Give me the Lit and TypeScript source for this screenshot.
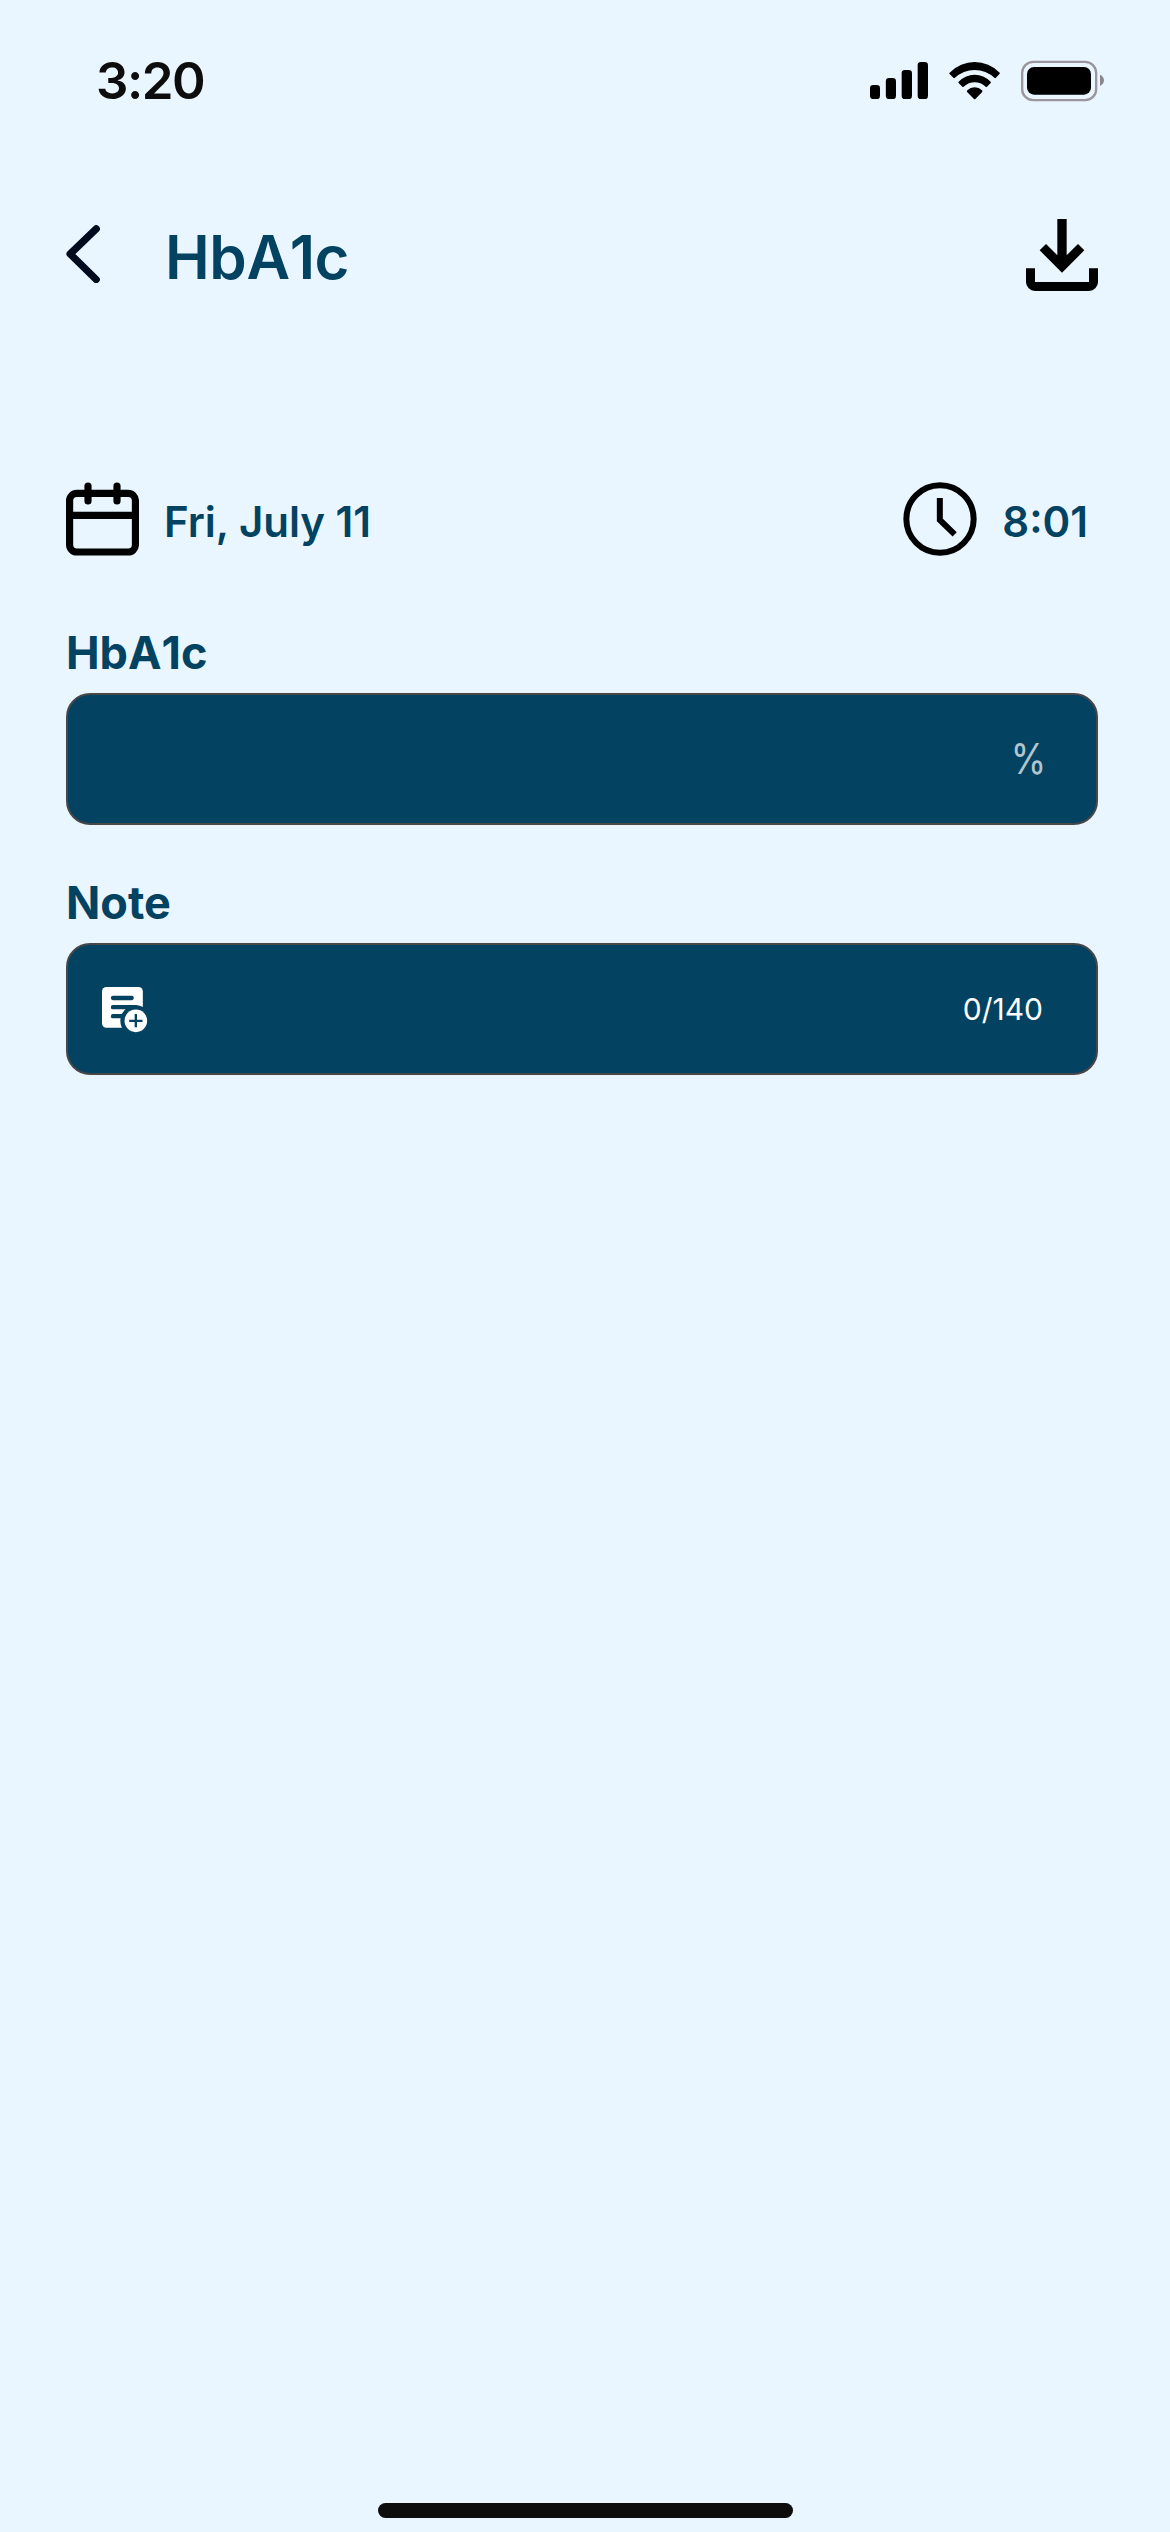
import { LitElement, html, css } from "lit";
import { customElement, property } from "lit/decorators.js";

const signalIcon = html`<svg width="58" height="42" viewBox="60 60 174 126">
  <rect x="60" y="135" width="30" height="42" rx="10" />
  <rect x="107.5" y="114" width="30.5" height="63" rx="10" />
  <rect x="155" y="90" width="31" height="87" rx="10" />
  <rect x="203" y="66" width="31" height="111" rx="10" />
</svg>`;

const wifiIcon = html`<svg width="51" height="42" viewBox="297 60 153 126">
  <path d="M299 98Q331 66 374 66Q417 66 449 98Q450 100 449 101L437 114Q435 115 434 114Q408 90 374 90Q340 90 314 114Q313 115 311 114L298 101Q297.500 100 299 98Z" />
  <path d="M326 125Q347 104 374 104Q401 104 422 125Q424 127 422 129L411 140Q409 142 407 140Q392 127 374 127Q356 127 341 140Q339 142 337 140L326 129Q324 127 326 125Z" />
  <path d="M352 151Q361 142 374 142Q387 142 396 151Q399 154 396 157L376 177Q374 179 372 177L352 157Q349 154 352 151Z" />
</svg>`;

const batteryIcon = html`<svg width="84" height="42" viewBox="513 60 252 126">
  <rect x="516.500" y="65.500" width="222" height="115" rx="33" fill="none" stroke="#9b959d" stroke-width="7" />
  <rect x="531" y="81" width="192" height="83" rx="21" />
  <path d="M750 104Q762 110 762 121Q762 132 750 138Z" fill="#8b868d" />
</svg>`;

const backIcon = html`<svg class="back" width="34" height="58" viewBox="50 74 102 174">
  <path d="M140.500 85.500L62.500 161L140.500 237.500" fill="none" stroke="#000c1d" stroke-width="22" stroke-linecap="round" stroke-linejoin="round" />
</svg>`;

const downloadIcon = html`<svg width="72" height="72" viewBox="78 57 216 216">
  <path d="M172 57H200V166L234 132L253 151L186 218L119 151L138 132L172 166Z" />
  <path d="M78 205H105V246H267V205H294V246A27 27 0 0 1 267 273H105A27 27 0 0 1 78 246Z" />
</svg>`;

const calendarIcon = html`<svg width="73" height="74" viewBox="48 36 219 222">
  <g fill="none" stroke="#000" stroke-width="21.500" stroke-linecap="round">
    <rect x="58.800" y="70" width="197.500" height="176" rx="22" />
    <path d="M59 136H256" />
    <path d="M114 48V93M201 48V93" />
  </g>
</svg>`;

const clockIcon = html`<svg width="74" height="74" viewBox="67 36 222 222">
  <g fill="none" stroke="#000" stroke-width="18">
    <circle cx="178" cy="147" r="101" />
    <path d="M177.500 84V150L222 193" />
  </g>
</svg>`;

const noteIcon = html`<svg class="note-icon" width="46" height="46" viewBox="156 351 138 138">
  <rect x="156" y="351" width="122.500" height="122" rx="13" fill="#fff" />
  <path d="M189 384H245M189 411.500H258M189 438.500H220" fill="none" stroke="#044261" stroke-width="13" stroke-linecap="round" />
  <circle cx="257.500" cy="452.500" r="46.500" fill="#044261" />
  <circle cx="257.500" cy="452.500" r="34" fill="#fff" />
  <path d="M257.500 432V472M237.500 452.500H277.500" stroke="#044261" stroke-width="7" />
</svg>`;

@customElement("entry-field")
class EntryField extends LitElement {
  @property() label = "";

  static styles = css`
    :host {
      display: block;
    }
    .label {
      height: 54px;
      line-height: 54px;
      margin-bottom: 13px;
      font-size: 45px;
      font-weight: 700;
      color: #044261;
    }
    .box {
      box-sizing: border-box;
      height: 132px;
      display: flex;
      align-items: center;
      padding: 0 50px 0 34px;
      border: 2px solid #474747;
      border-radius: 24px;
      background: #044261;
    }
  `;

  render() {
    return html`<div class="label">${this.label}</div>
      <div class="box"><slot></slot></div>`;
  }
}

@customElement("app-root")
class AppRoot extends LitElement {
  static styles = css`
    :host {
      display: block;
      font-family: Inter, "Liberation Sans", sans-serif;
    }
    svg {
      display: block;
      flex: none;
    }
    .screen {
      box-sizing: border-box;
      height: 2532px;
      display: flex;
      flex-direction: column;
      background: #e9f6ff;
      color: #044261;
    }
    .status {
      display: flex;
      align-items: center;
      justify-content: space-between;
      height: 62px;
      padding: 50px 65px 0 96px;
    }
    .time {
      font-size: 51px;
      line-height: 62px;
      font-weight: 600;
      letter-spacing: -1.5px;
      color: #0d0d0d;
    }
    .indicators {
      display: flex;
      gap: 21px;
    }
    .header {
      display: flex;
      align-items: center;
      height: 74px;
      margin-top: 106px;
      padding: 0 72px 0 66px;
    }
    .back {
      margin-bottom: 2px;
    }
    .title {
      flex: 1;
      margin: 0;
      padding: 4px 0 0 65px;
      font-size: 60px;
      line-height: 74px;
      font-weight: 600;
      font-kerning: none;
      letter-spacing: -0.4px;
    }
    .when {
      display: flex;
      align-items: center;
      justify-content: space-between;
      height: 74px;
      margin-top: 190px;
      padding: 0 82px 0 66px;
    }
    .stamp {
      display: flex;
      align-items: center;
      gap: 25px;
      font-size: 42px;
      line-height: 54px;
      font-weight: 600;
    }
    .stamp span {
      padding-top: 5px;
    }
    .form {
      flex: 1;
      display: flex;
      flex-direction: column;
      gap: 51px;
      padding: 70px 72px 0 66px;
    }
    .reading {
      font-kerning: none;
    }
    .note-icon {
      margin-top: 2px;
    }
    .unit {
      margin-left: auto;
      font-size: 42px;
      line-height: 50px;
      transform: scaleX(0.86);
      transform-origin: right center;
      color: #b3c6cf;
    }
    .count {
      margin-left: auto;
      margin-right: 3px;
      font-size: 30px;
      line-height: 36px;
      color: #fff;
    }
    .home {
      align-self: center;
      width: 415px;
      height: 15px;
      margin-bottom: 14px;
      border-radius: 8px;
      background: #0d0d0d;
    }
  `;

  render() {
    return html`<main class="screen">
      <div class="status">
        <div class="time">3:20</div>
        <div class="indicators">${signalIcon}${wifiIcon}${batteryIcon}</div>
      </div>
      <header class="header">
        ${backIcon}
        <h1 class="title">HbA1c</h1>
        ${downloadIcon}
      </header>
      <section class="when">
        <div class="stamp">${calendarIcon}<span>Fri, July 11</span></div>
        <div class="stamp">${clockIcon}<span>8:01</span></div>
      </section>
      <section class="form">
        <entry-field class="reading" label="HbA1c"><span class="unit">%</span></entry-field>
        <entry-field label="Note">${noteIcon}<span class="count">0/140</span></entry-field>
      </section>
      <div class="home"></div>
    </main>`;
  }
}
